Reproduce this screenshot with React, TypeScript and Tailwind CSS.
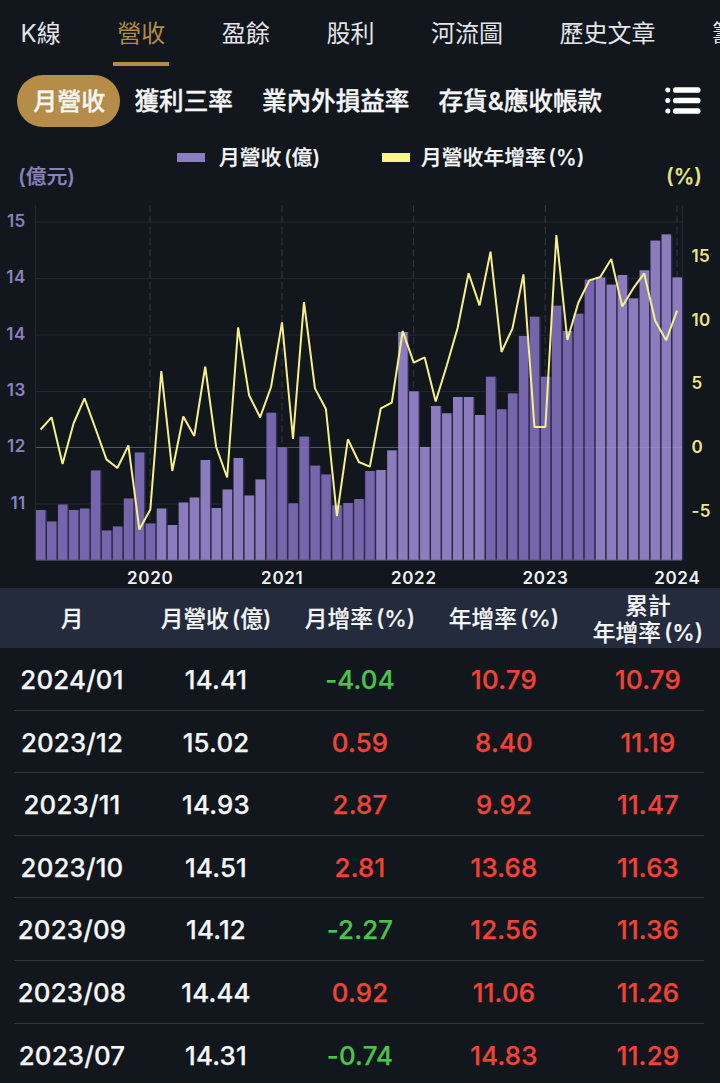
const tabs = ['K線', '營收', '盈餘', '股利', '河流圖', '歷史文章', '籌碼']
const subTabs = ['月營收', '獲利三率', '業內外損益率', '存貨&應收帳款']

// chart geometry, in the svg's own units
const STEP = 10.974
const BASE = 560

const bars = [
    510, 521.5, 504.5, 510, 508.5, 470.5, 530.5, 526.5, 498.5, 452.5,
    523.5, 508.5, 525, 502.5, 497.5, 460, 508, 489.5, 458, 495.5,
    479.5, 412.7, 447.3, 503.3, 436.6, 465.6, 474.5, 505.3, 503, 499,
    471, 470, 450.4, 332, 391.3, 447, 406, 413.3, 397, 397,
    415, 376.7, 409.3, 393.4, 336, 316.7, 376.7, 305.7, 331, 313.7,
    279.7, 277.5, 284.6, 275, 298.4, 270.3, 240.6, 234.4, 277.4,
]

const growth = [
    429.5, 417.3, 464, 423.5, 398.3, 428.5, 459.4, 468, 445.5, 529.5,
    509.5, 371, 471, 416.5, 436, 366.7, 447, 477.5, 327.4, 395.3,
    417.3, 387, 322.3, 439, 302, 388.4, 409, 516, 439.3, 462,
    466.7, 408.3, 402.6, 331, 362.6, 357.4, 401.5, 366, 328, 273.3,
    305.4, 251.7, 352, 328.4, 274.4, 427, 427, 235, 340, 302.7,
    280.4, 277, 259, 306.4, 288.4, 273.4, 320.7, 340.3, 310.7,
]

const leftAxis = [
    { y: 222, label: '15' },
    { y: 278.5, label: '14' },
    { y: 335, label: '14' },
    { y: 391.5, label: '13' },
    { y: 447.5, label: '12' },
    { y: 504, label: '11' },
]

const rightAxis = [
    { y: 255.5, label: '15' },
    { y: 319.5, label: '10' },
    { y: 383, label: '5' },
    { y: 447, label: '0' },
    { y: 511, label: '-5' },
]

const years = [
    { x: 150, label: '2020' },
    { x: 282, label: '2021' },
    { x: 413.5, label: '2022' },
    { x: 545.3, label: '2023' },
    { x: 677, label: '2024' },
]

const rows = [
    ['2024/01', '14.41', '-4.04', '10.79', '10.79'],
    ['2023/12', '15.02', '0.59', '8.40', '11.19'],
    ['2023/11', '14.93', '2.87', '9.92', '11.47'],
    ['2023/10', '14.51', '2.81', '13.68', '11.63'],
    ['2023/09', '14.12', '-2.27', '12.56', '11.36'],
    ['2023/08', '14.44', '0.92', '11.06', '11.26'],
    ['2023/07', '14.31', '-0.74', '14.83', '11.29'],
]

const barColor = (i: number) => {
    if (i < 11 || (i > 20 && i < 31) || (i > 40 && i < 51)) return '#7566ab'
    return '#8b7dbd'
}

const cellColor = (value: string, col: number) => {
    if (col < 2) return 'text-[#f5f6f8]'
    return value.startsWith('-') ? 'text-[#4cc44c]' : 'text-[#f44336]'
}

const Chart = () => {
    const points = growth.map((y, i) => `${40.6 + i * STEP},${y}`).join(' ')

    return (
        <svg className="block h-[388px] w-[720px]" viewBox="0 200 720 388">
            {leftAxis.map((t, i) => (
                <line key={i} x1="36" x2="682" y1={t.y} y2={t.y} stroke={t.label === '12' ? '#46484f' : '#23282f'} strokeWidth="1.2" />
            ))}
            <path d="M35.5 205V560M682.5 205V560" stroke="#23282f" strokeWidth="1.2" />
            {years.map((t) => (
                <line key={t.label} x1={t.x} x2={t.x} y1="205" y2="560" stroke="#2c3137" strokeWidth="1.3" strokeDasharray="7 4" />
            ))}

            {bars.map((y, i) => (
                <g key={i}>
                    <rect x={36 + i * STEP} y={y} width="11" height={BASE - y} fill="#2c2748" />
                    <rect x={36 + i * STEP} y={y} width="9.5" height={BASE - y} fill={barColor(i)} />
                </g>
            ))}
            <path d="M36 447.5H682" stroke="#ffffff" strokeOpacity="0.08" />
            <path d="M36 560.2H682" stroke="#5a5470" />
            <polyline points={points} fill="none" stroke="#f6f08a" strokeWidth="2" strokeLinejoin="bevel" />

            <g fontFamily="Inter, sans-serif" fontWeight="600" fontSize="17">
                {leftAxis.map((t, i) => (
                    <text key={i} x="25.8" y={t.y + 4.8} textAnchor="end" fill="#8b82bb" letterSpacing="0.5">{t.label}</text>
                ))}
                {rightAxis.map((t) => (
                    <text key={t.label} x="691.5" y={t.y + 6} fill="#ece786" letterSpacing="0.4">{t.label}</text>
                ))}
                {years.map((t) => (
                    <text key={t.label} x={t.x + 0.3} y="584" textAnchor="middle" fill="#f0f1f3" letterSpacing="0.7">{t.label}</text>
                ))}
            </g>
        </svg>
    )
}

const ListIcon = () => (
    <svg className="h-8 w-9" viewBox="0 0 36 32" fill="#ffffff">
        {[5, 15.5, 26].map((y) => (
            <g key={y}>
                <circle cx="2.8" cy={y} r="2.5" />
                <rect x="8" y={y - 2.8} width="27.5" height="5.6" rx="2.6" />
            </g>
        ))}
    </svg>
)

export default function App() {
    return (
        <div className="h-[1083px] w-[720px] overflow-hidden bg-[#12161d] font-['Inter','Noto_Sans_CJK_TC',sans-serif] text-[#f5f6f8]">
            <nav className="flex h-[66px] gap-[56.6px] overflow-hidden pl-[20.5px] text-[24px] leading-[68px] text-[#e3e5e8]">
                {tabs.map((tab) => (
                    <div key={tab} className={tab === '營收' ? 'relative shrink-0 text-[#b28b45]' : 'shrink-0'}>
                        {tab}
                        {tab === '營收' && <span className="absolute -left-1 -right-1 bottom-0 h-1 bg-[#b58c48]"></span>}
                    </div>
                ))}
            </nav>

            <div className="flex h-[70px] items-center pl-[17px] pr-[19px] text-[24.6px] font-medium [-webkit-text-stroke:0.35px]">
                {subTabs.map((tab, i) => (
                    <div
                        key={tab}
                        className={
                            i === 0
                                ? 'mr-[15px] flex h-[52px] w-[102.5px] items-center justify-center rounded-full bg-[#b58c48] pl-[2px] pt-px text-[24px]'
                                : 'mr-[29px] whitespace-nowrap pt-px'
                        }
                    >
                        {tab}
                    </div>
                ))}
                <div className="ml-auto">
                    <ListIcon />
                </div>
            </div>

            <div className="flex h-[64px] pl-[18px] pr-[18px] text-[20.8px] font-medium [-webkit-text-stroke:0.25px]">
                <span className="w-[159px] pt-[26px] leading-[30px] text-[#8b82bb]">(億元)</span>
                <div className="flex h-[43px] items-center whitespace-nowrap [word-spacing:-3px]">
                    <i className="mr-[14px] h-[9px] w-7 bg-[#8b7dbf]"></i>
                    <span className="w-[163px]">月營收 (億)</span>
                    <i className="mr-[11px] h-[9px] w-7 bg-[#fdf681]"></i>
                    <span>月營收年增率 (%)</span>
                </div>
                <span className="ml-auto pt-[26px] leading-[30px] text-[#ece786]">(%)</span>
            </div>

            <Chart />

            <div className="grid h-[60px] grid-cols-5 items-center bg-[#232b3c] text-center text-[22.7px] font-medium leading-[27px] [-webkit-text-stroke:0.2px] [word-spacing:-3px]">
                <div>月</div>
                <div>月營收 (億)</div>
                <div>月增率 (%)</div>
                <div>年增率 (%)</div>
                <div className="pt-px">累計<br />年增率 (%)</div>
            </div>

            {rows.map((row) => (
                <div key={row[0]} className="px-[14px]">
                    <div className="-mx-[14px] grid h-[61.6px] grid-cols-5 items-center pt-[3px] text-center text-[25.8px] font-medium tracking-[0.2px] [-webkit-text-stroke:0.25px]">
                        {row.map((value, col) => (
                            <div key={col} className={cellColor(value, col)}>{value}</div>
                        ))}
                    </div>
                    <div className="mr-[2px] h-px bg-[#30343b]"></div>
                </div>
            ))}
        </div>
    )
}
